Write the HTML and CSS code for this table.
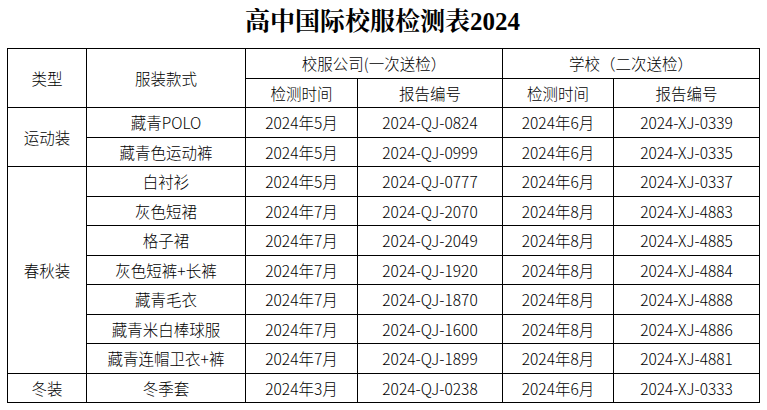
FILE: index.html
```html
<!DOCTYPE html>
<html lang="zh-CN">
<head>
<meta charset="utf-8">
<title>高中国际校服检测表2024</title>
<link rel="stylesheet" href="styles.css">
</head>
<body>
<div class="page">
  <h1 class="title">高中国际校服检测表2024</h1>
  <table class="sheet">
    <colgroup>
      <col class="c-type"><col class="c-item"><col class="c-date1"><col class="c-no1"><col class="c-date2"><col class="c-no2">
    </colgroup>
    <thead>
      <tr>
        <th rowspan="2">类型</th>
        <th rowspan="2">服装款式</th>
        <th colspan="2">校服公司(一次送检）</th>
        <th colspan="2">学校（二次送检）</th>
      </tr>
      <tr>
        <th>检测时间</th><th>报告编号</th><th>检测时间</th><th>报告编号</th>
      </tr>
    </thead>
    <tbody>
      <tr><td rowspan="2">运动装</td><td>藏青POLO</td><td>2024年5月</td><td>2024-QJ-0824</td><td>2024年6月</td><td>2024-XJ-0339</td></tr>
      <tr><td>藏青色运动裤</td><td>2024年5月</td><td>2024-QJ-0999</td><td>2024年6月</td><td>2024-XJ-0335</td></tr>
      <tr><td rowspan="7">春秋装</td><td>白衬衫</td><td>2024年5月</td><td>2024-QJ-0777</td><td>2024年6月</td><td>2024-XJ-0337</td></tr>
      <tr><td>灰色短裙</td><td>2024年7月</td><td>2024-QJ-2070</td><td>2024年8月</td><td>2024-XJ-4883</td></tr>
      <tr><td>格子裙</td><td>2024年7月</td><td>2024-QJ-2049</td><td>2024年8月</td><td>2024-XJ-4885</td></tr>
      <tr><td>灰色短裤+长裤</td><td>2024年7月</td><td>2024-QJ-1920</td><td>2024年8月</td><td>2024-XJ-4884</td></tr>
      <tr><td>藏青毛衣</td><td>2024年7月</td><td>2024-QJ-1870</td><td>2024年8月</td><td>2024-XJ-4888</td></tr>
      <tr><td>藏青米白棒球服</td><td>2024年7月</td><td>2024-QJ-1600</td><td>2024年8月</td><td>2024-XJ-4886</td></tr>
      <tr><td>藏青连帽卫衣+裤</td><td>2024年7月</td><td>2024-QJ-1899</td><td>2024年8月</td><td>2024-XJ-4881</td></tr>
      <tr><td>冬装</td><td>冬季套</td><td>2024年3月</td><td>2024-QJ-0238</td><td>2024年6月</td><td>2024-XJ-0333</td></tr>
    </tbody>
  </table>
</div>
</body>
</html>
```
FILE: styles.css
```css
html, body {
  margin: 0;
  padding: 0;
  background: #ffffff;
}

.page {
  width: 767px;
  padding: 0 0 0 7px;
  box-sizing: border-box;
  color: #000000;
}

.title {
  margin: 0;
  height: 48px;
  line-height: 44px;
  text-align: center;
  font-family: "Liberation Serif", "Noto Serif CJK SC", "Noto Sans CJK SC", serif;
  font-size: 25px;
  font-weight: bold;
  width: 751px;
}

.sheet {
  border-collapse: collapse;
  table-layout: fixed;
  width: 752px;
  font-family: "Noto Sans CJK SC", sans-serif;
  font-size: 15.5px;
  font-weight: 300;
}

.c-type { width: 79px; }
.c-item { width: 159px; }
.c-date1 { width: 112px; }
.c-no1 { width: 145px; }
.c-date2 { width: 111px; }
.c-no2 { width: 146px; }

.sheet th,
.sheet td {
  border: 1px solid #000000;
  padding: 0;
  height: 28.5px;
  text-align: center;
  vertical-align: middle;
  font-weight: 300;
  line-height: 18px;
  white-space: nowrap;
}
```
